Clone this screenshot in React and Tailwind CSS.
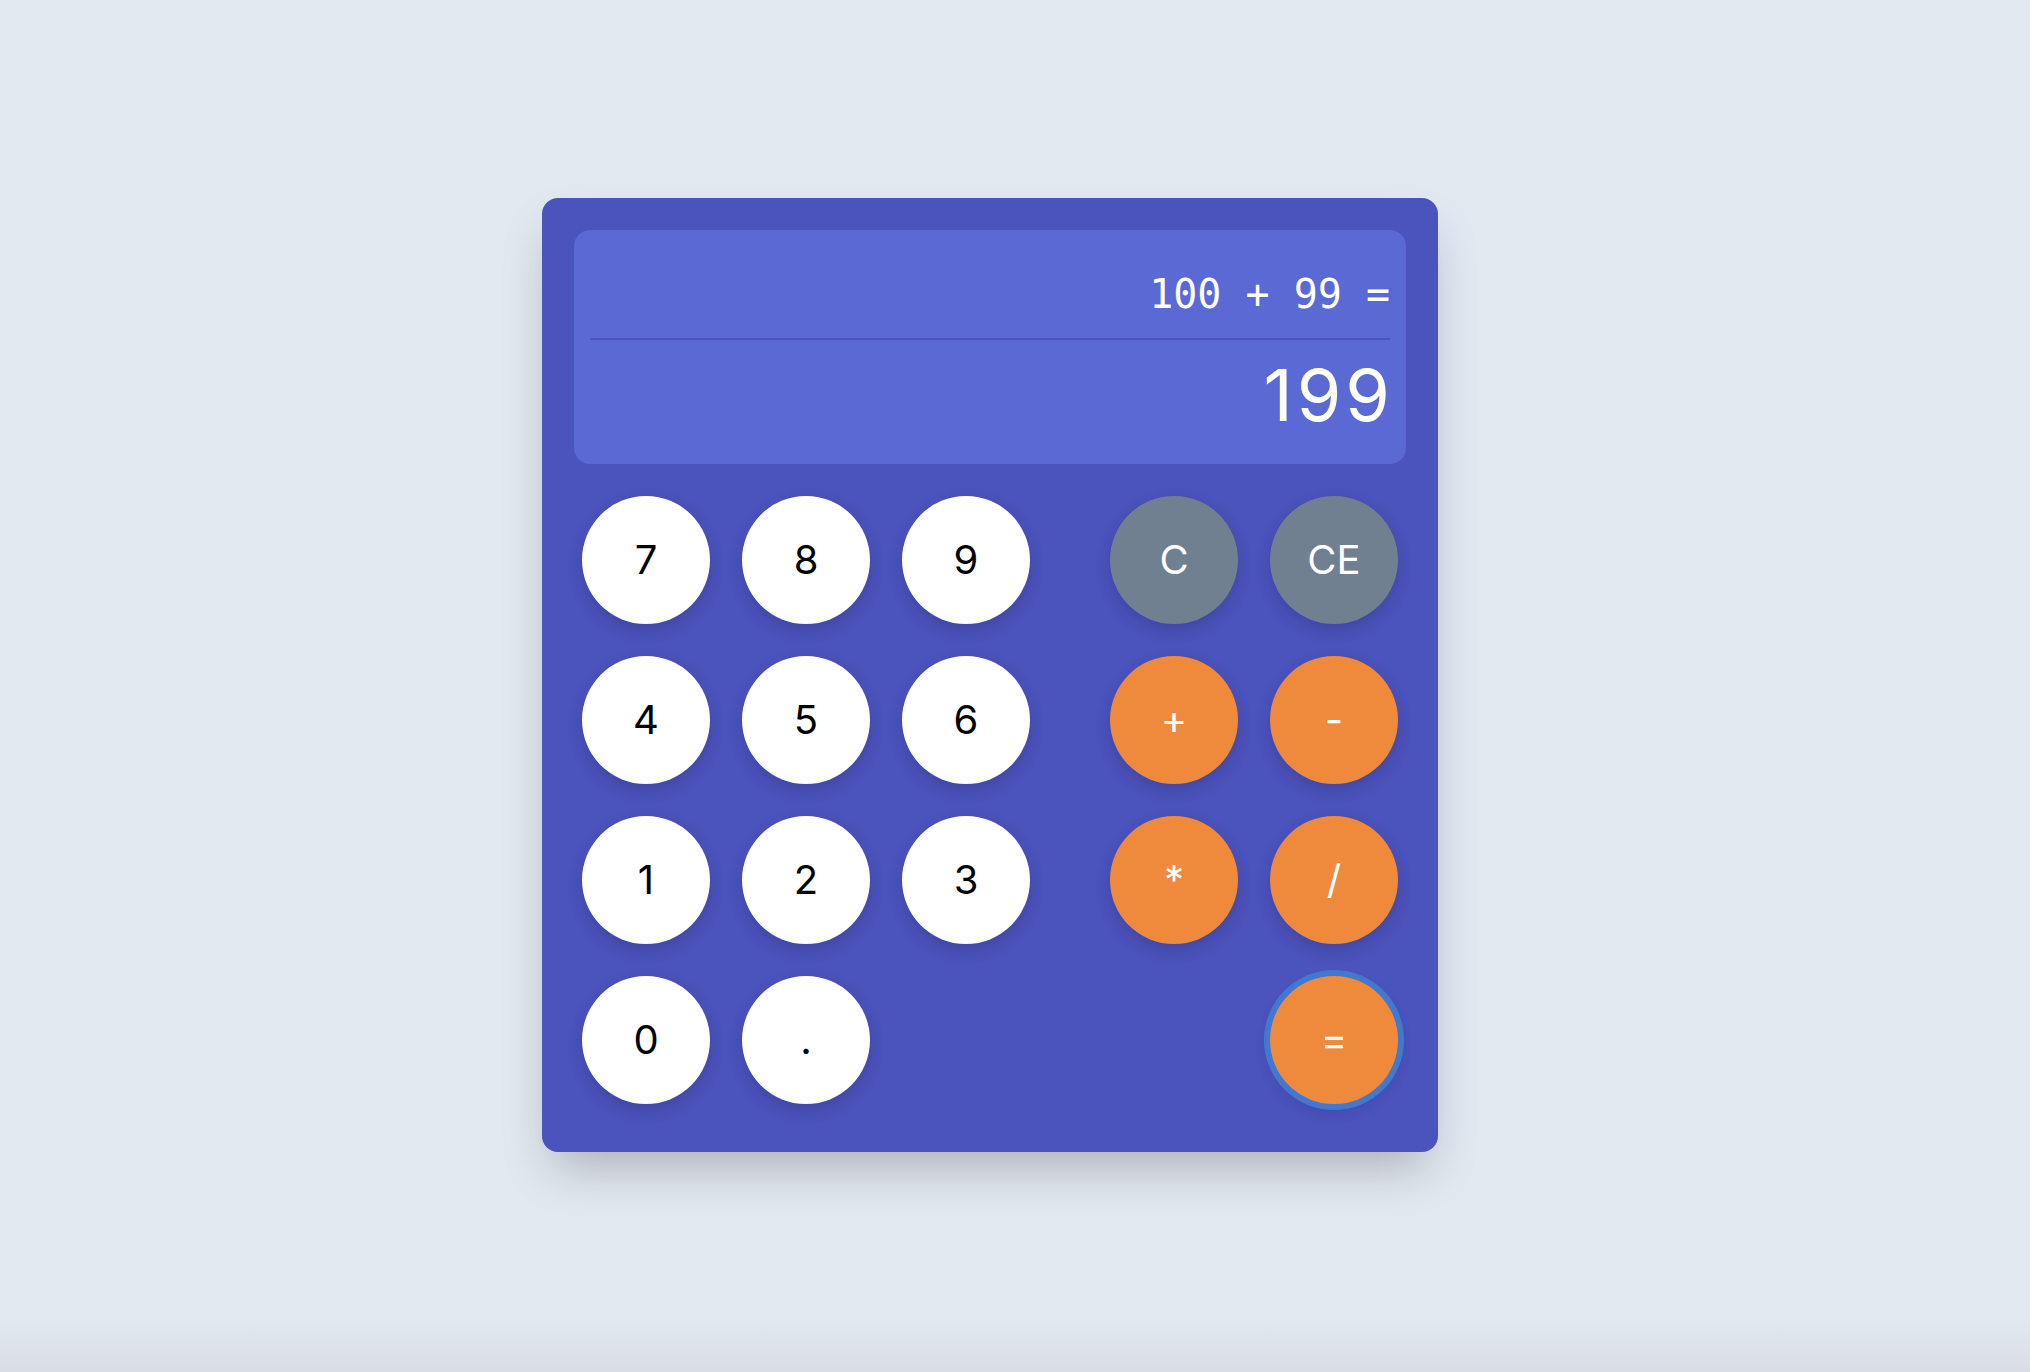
import React from "react";

const keys = {
  digits: [
    ["7", "8", "9"],
    ["4", "5", "6"],
    ["1", "2", "3"],
    ["0", "."],
  ],
  ops: [
    [
      { label: "C", kind: "clear" },
      { label: "CE", kind: "clear" },
    ],
    [
      { label: "+", kind: "op" },
      { label: "-", kind: "op" },
    ],
    [
      { label: "*", kind: "op" },
      { label: "/", kind: "op" },
    ],
    [null, { label: "=", kind: "equals" }],
  ],
};

const kindStyles = {
  digit: "bg-white text-black",
  clear: "bg-[#708090] text-white",
  op: "bg-[#ef8a3c] text-white",
  equals: "bg-[#ef8a3c] text-white ring-[6px] ring-[#4279d0]",
};

const Key = ({ label, kind = "digit" }) => (
  <button
    type="button"
    className={`flex h-32 w-32 items-center justify-center rounded-full text-[40px] shadow-[0_6px_14px_rgba(30,30,90,0.25)] ${kindStyles[kind]}`}
  >
    {label}
  </button>
);

export default function App() {
  return (
    <div
      className="min-h-screen bg-[linear-gradient(to_bottom,#e2e8f0_96%,#d8dde6_100%)] pl-[542px] pt-[198px]"
      style={{ fontFamily: "Inter, 'Noto Sans', sans-serif" }}
    >
      <div className="w-[896px] rounded-2xl bg-[#4b53bc] px-8 pb-12 pt-8 shadow-2xl">
        <div className="flex flex-col rounded-2xl bg-[#5a69d4] px-4 pb-[14px] pt-4">
          <div
            className="flex h-[94px] items-center justify-end border-b-2 border-[#4b53bc] pt-1 text-[40px] leading-none text-white"
            style={{ fontFamily: "'DejaVu Sans Mono', 'Liberation Mono', monospace" }}
          >
            100 + 99 =
          </div>
          <div className="flex h-[110px] items-center justify-end text-[72px] leading-none text-white">
            <span className="-mr-[4px] tracking-[4px]">199</span>
          </div>
        </div>

        <div className="mt-8 flex justify-between px-2">
          <div className="flex flex-col gap-8">
            {keys.digits.map((row, i) => (
              <div key={i} className="flex gap-8">
                {row.map((k) => (
                  <Key key={k} label={k} />
                ))}
              </div>
            ))}
          </div>
          <div className="flex flex-col gap-8">
            {keys.ops.map((row, i) => (
              <div key={i} className="flex gap-8">
                {row.map((k, j) =>
                  k ? (
                    <Key key={k.label} label={k.label} kind={k.kind} />
                  ) : (
                    <div key={j} className="h-32 w-32" />
                  )
                )}
              </div>
            ))}
          </div>
        </div>
      </div>
    </div>
  );
}
